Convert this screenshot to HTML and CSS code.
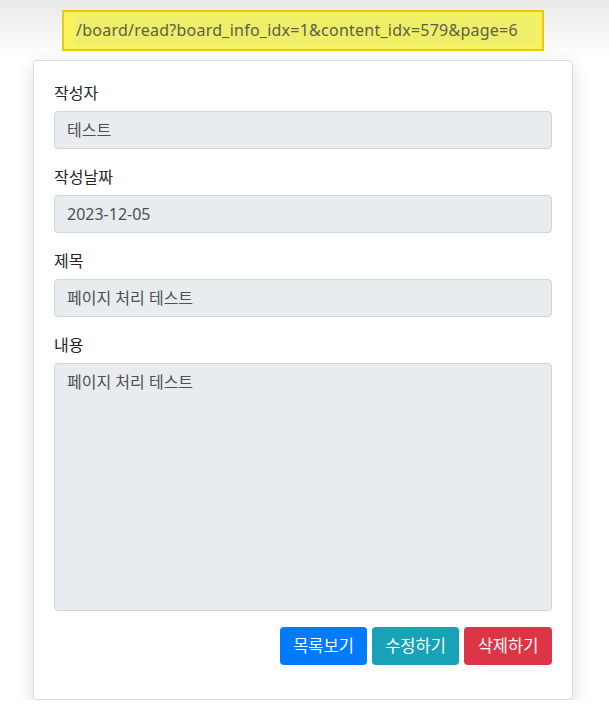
FILE: index.html
```html
<!DOCTYPE html>
<html lang="ko">
<head>
<meta charset="utf-8">
<title>게시글 읽기</title>
<link rel="stylesheet" href="styles.css">
</head>
<body>
<div class="page">
  <div class="url-bar"><span class="url-text">/board/read?board_info_idx=1&amp;content_idx=579&amp;page=6</span></div>
  <div class="card">
    <div class="card-body">
      <div class="form-group">
        <label class="form-label">작성자</label>
        <div class="form-control">테스트</div>
      </div>
      <div class="form-group">
        <label class="form-label">작성날짜</label>
        <div class="form-control">2023-12-05</div>
      </div>
      <div class="form-group">
        <label class="form-label">제목</label>
        <div class="form-control">페이지 처리 테스트</div>
      </div>
      <div class="form-group">
        <label class="form-label">내용</label>
        <div class="form-control textarea">페이지 처리 테스트</div>
      </div>
      <div class="form-group actions">
        <a class="btn btn-primary">목록보기</a>
        <a class="btn btn-info">수정하기</a>
        <a class="btn btn-danger">삭제하기</a>
      </div>
    </div>
  </div>
</div>
</body>
</html>
```

FILE: styles.css
```css
html, body {
  margin: 0;
  padding: 0;
}
body {
  background: #fff linear-gradient(#e9e9e9, #ffffff 58px) no-repeat;
  font-family: "Noto Sans", "Noto Sans CJK KR", sans-serif;
  font-size: 16px;
  line-height: 1.5;
  color: #212529;
}
.page {
  width: 540px;
  margin-left: 33px;
  padding-top: 10px;
}
.url-bar {
  height: 37px;
  width: 467px;
  margin-left: 29px;
  background: #f6f35f;
  border: 2px solid #f1c714;
  display: flex;
  align-items: center;
  padding-left: 11px;
  box-sizing: content-box;
}
.url-text {
  background: #eeee68;
  color: #5f5f48;
  font-size: 16px;
  line-height: 29px;
  padding: 0 17px 0 1px;
  letter-spacing: 0.24px;
  white-space: nowrap;
}
.card {
  margin-top: 9px;
  background: #fff;
  border: 1px solid #dcdcdc;
  border-radius: 4px;
  box-shadow: 0 5px 18px rgba(0, 0, 0, 0.14);
}
.card-body {
  padding: 20px 20px 18px;
}
.form-group {
  margin-bottom: 16px;
}
.form-label {
  display: block;
  margin-bottom: 6px;
  line-height: 24px;
}
.form-control {
  height: 38px;
  box-sizing: border-box;
  padding: 6px 12px;
  background: #e9ecef;
  border: 1px solid #ced4da;
  border-radius: 4px;
  color: #495057;
  line-height: 24px;
}
.textarea {
  height: 248px;
}
.actions {
  display: flex;
  justify-content: flex-end;
  gap: 5px;
  padding-right: 0;
}
.btn {
  display: inline-block;
  width: 87px;
  height: 38px;
  box-sizing: border-box;
  border-radius: 4px;
  color: #fff;
  text-align: center;
  line-height: 38px;
  font-size: 16.5px;
}
.btn-primary { background: #007bff; }
.btn-info { background: #17a2b8; }
.btn-danger { background: #dc3545; width: 88px; }
```
